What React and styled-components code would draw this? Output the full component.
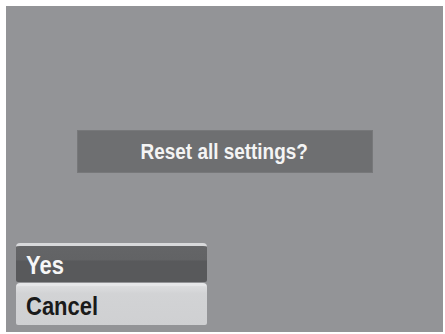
import React from 'react';
import styled, { createGlobalStyle } from 'styled-components';

const GlobalStyle = createGlobalStyle`
  html, body {
    margin: 0;
    padding: 0;
    background: #ffffff;
  }
  body {
    font-family: "Liberation Sans", Arial, sans-serif;
  }
`;

const Screen = styled.div`
  box-sizing: border-box;
  margin: 6px 0 0 6px;
  width: 437px;
  height: 326px;
  background: #939497;
  display: flex;
  flex-direction: column;
  padding: 124px 0 7px 10px;
`;

const Prompt = styled.div`
  align-self: center;
  margin-left: -10px;
  width: 296px;
  height: 43px;
  background: #6e6f71;
  box-shadow: inset 0 0 0 1px #77787a;
  display: flex;
  align-items: center;
  justify-content: center;
  color: #f4f4f4;
  font-weight: bold;
  font-size: 22px;
`;

// the device font is a narrow face; squeeze the regular one to match
const Narrow = styled.span`
  display: inline-block;
  white-space: nowrap;
  transform: scaleX(${(p) => p.$scale || 0.86});
  transform-origin: ${(p) => (p.$left ? 'left center' : 'center')};
`;

const Spacer = styled.div`
  flex: 1;
`;

const Menu = styled.div`
  display: flex;
  flex-direction: column;
  width: 191px;
  gap: 1px;
`;

const Option = styled.div`
  box-sizing: border-box;
  height: ${(p) => (p.$selected ? '39px' : '42px')};
  border-radius: 4px 4px 2px 2px;
  display: flex;
  align-items: center;
  padding: 2px 0 0 10px;
  font-weight: bold;
  font-size: 25px;
  color: ${(p) => (p.$selected ? '#f6f6f6' : '#1a1a1a')};
  background: ${(p) =>
    p.$selected
      ? 'linear-gradient(#646567 0%, #626365 38%, #58595b 42%, #58595b 100%)'
      : 'linear-gradient(#dcdddf 0%, #d2d3d5 20%, #cfd0d2 100%)'};
  border-top: 3px solid ${(p) => (p.$selected ? '#d8d9db' : '#e6e7e9')};
`;

export default function App() {
  return (
    <>
      <GlobalStyle />
      <Screen>
        <Prompt>
          <Narrow>Reset all settings?</Narrow>
        </Prompt>
        <Spacer />
        <Menu>
          <Option $selected>
            <Narrow $left $scale={0.88}>Yes</Narrow>
          </Option>
          <Option>
            <Narrow $left $scale={0.88}>Cancel</Narrow>
          </Option>
        </Menu>
      </Screen>
    </>
  );
}
